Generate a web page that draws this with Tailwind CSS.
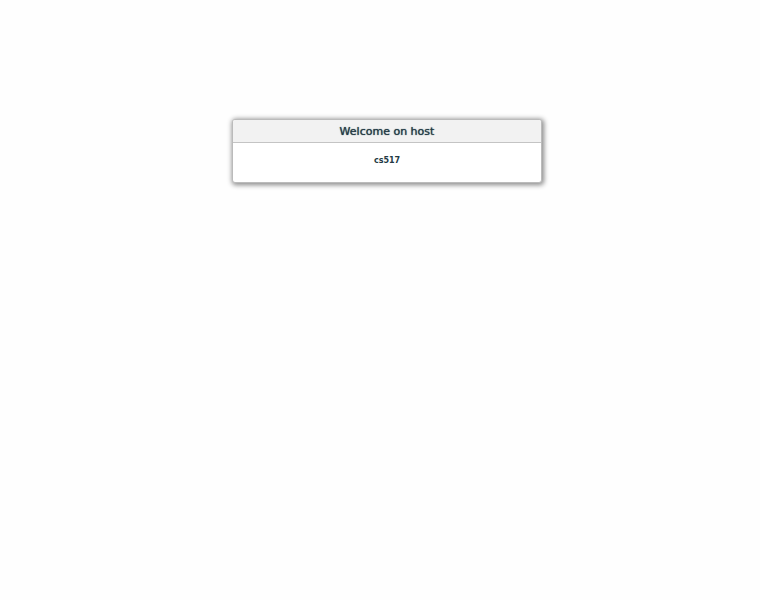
<!DOCTYPE html>
<html lang="en">
<head>
  <meta charset="UTF-8" />
  <meta name="viewport" content="width=device-width, initial-scale=1.0"/>
  <title>Welcome</title>
  <script src="https://cdn.jsdelivr.net/npm/@tailwindcss/browser@4"></script>
</head>

<body class="bg-[#fefefe] min-h-screen pt-[119px] pl-[14px] font-['DejaVu_Sans',sans-serif] text-[#233a45]">
  <!-- Host panel -->
  <main class="w-full max-w-[310px] mx-auto bg-white border border-[#bbb] rounded-[3px] shadow-[1px_1px_5px_1px_#888] text-center overflow-hidden">
    <h1 class="bg-[#f2f2f2] border-b border-[#c4c4c4] h-[23px] leading-[23px] text-[11px] font-normal [text-shadow:0_0_1px_#233a45]">Welcome on host</h1>
    <p class="pt-3 pb-4 text-[8px] leading-[11px] font-bold">cs517</p>
  </main>
</body>
</html>
